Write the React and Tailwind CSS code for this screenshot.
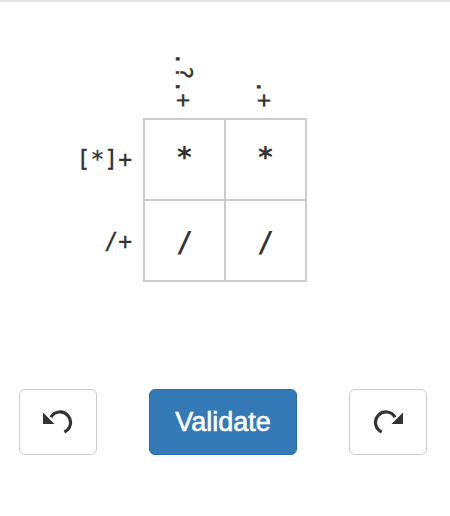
import { useState } from 'react'

const mono = { fontFamily: '"DejaVu Sans Mono", "Liberation Mono", monospace' }

const colClues = ['.?.+', '.+']
const rowClues = ['[*]+', '/+']
const initialBoard = [
  ['*', '*'],
  ['/', '/'],
]

function UndoIcon({ flip = false }) {
  return (
    <svg width="30" height="25" viewBox="0 0 30 25" className={flip ? '-scale-x-100' : ''}>
      <path d="M7.9 7.25 A10.5 10.5 0 1 1 21.4 22" fill="none" stroke="#333" strokeWidth="3.2" />
      <polygon points="0,2.5 0,14 11.5,14" fill="#333" />
    </svg>
  )
}

export default function App() {
  const [board] = useState(initialBoard)

  return (
    <div className="min-h-screen bg-white border-t-2 border-[#e6e6e6] text-[#333]">
      {/* Puzzle */}
      <div className="pt-[50px] grid grid-cols-[1fr_81px_83px_1fr]">
        <div />
        {colClues.map((clue, i) => (
          <div
            key={clue}
            className={`self-end mb-[11px] flex justify-center ${i === 1 ? 'pr-[2px]' : ''}`}
          >
            <span
              className="[writing-mode:vertical-lr] text-[23px] leading-none [-webkit-text-stroke:0.3px_#333]"
              style={mono}
            >
              {clue}
            </span>
          </div>
        ))}
        <div />

        {rowClues.map((clue, r) => (
          <div key={clue} className="contents">
            <div
              className="flex items-center justify-end pr-[11px] text-[23px] [-webkit-text-stroke:0.3px_#333]"
              style={mono}
            >
              {clue}
            </div>
            {board[r].map((ch, c) => (
              <div
                key={c}
                className={`flex items-center justify-center border-[#ccc] border-l-2 border-t-2 text-[28px] font-bold ${
                  c === 1 ? 'border-r-2' : ''
                } ${r === 1 ? 'h-[83px] border-b-2 pt-[4px]' : 'h-[81px] pb-[4px]'}`}
                style={mono}
              >
                {ch}
              </div>
            ))}
            <div />
          </div>
        ))}
      </div>

      {/* Controls */}
      <div className="mt-[107px] flex items-center gap-[52px] pl-[19px]">
        <button className="w-[78px] h-[66px] bg-white border border-[#ccc] rounded-[6px] flex items-center justify-center">
          <UndoIcon />
        </button>
        <button
          className="w-[148px] h-[66px] bg-[#337ab7] border border-[#2e6da4] rounded-[6px] text-white text-[27px] [-webkit-text-stroke:0.6px_white]"
          style={{ fontFamily: '"Liberation Sans", Arial, sans-serif' }}
        >
          Validate
        </button>
        <button className="w-[78px] h-[66px] bg-white border border-[#ccc] rounded-[6px] flex items-center justify-center">
          <UndoIcon flip />
        </button>
      </div>
    </div>
  )
}
